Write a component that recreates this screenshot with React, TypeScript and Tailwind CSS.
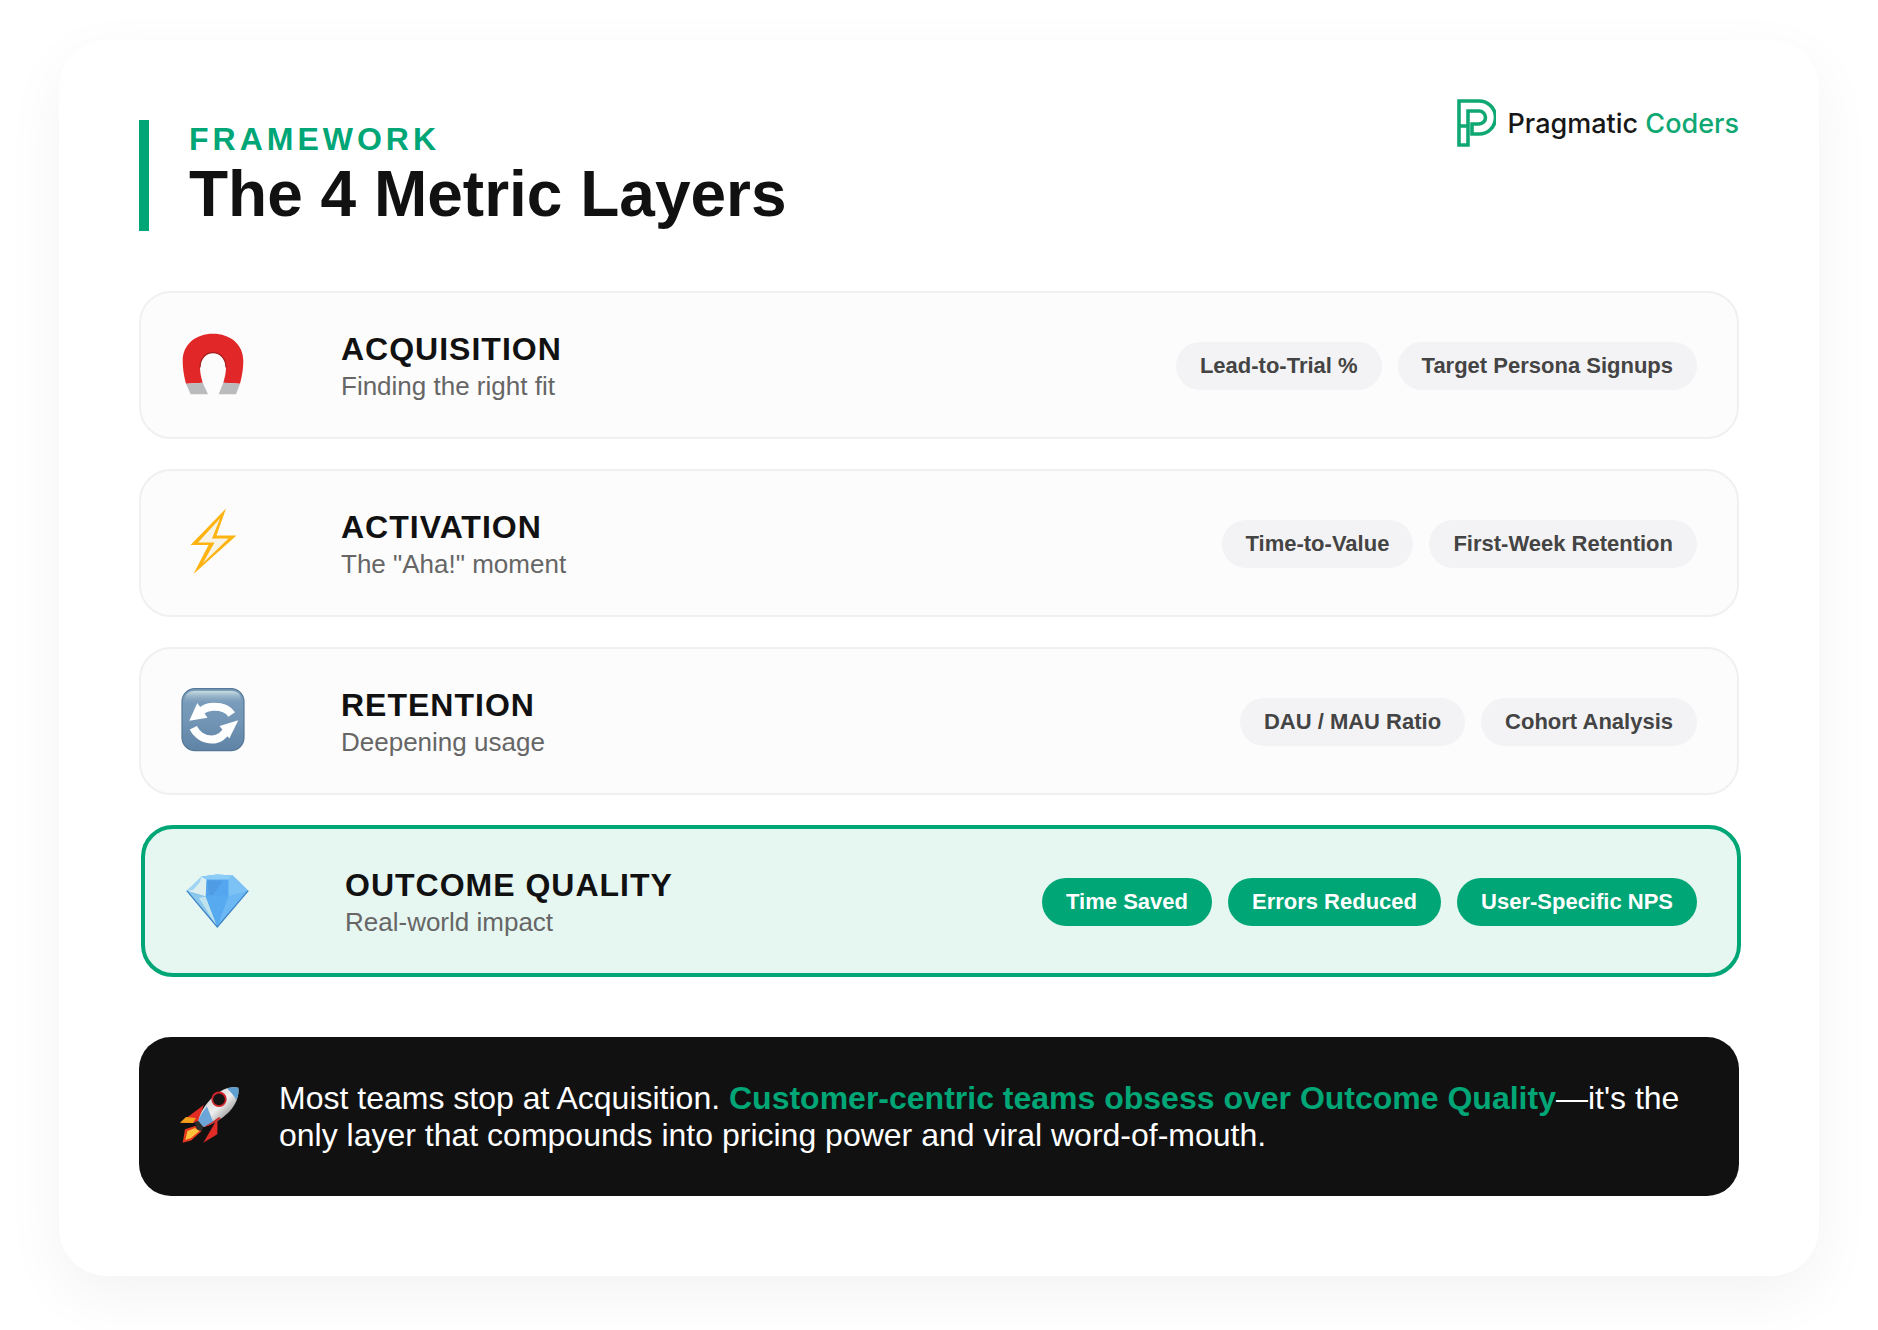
import React from "react";

const Magnet = () => (
  <svg viewBox="0 0 64 64" className="h-[64px] w-[64px] overflow-visible">
    <path d="M5 51.7C2.500 43 1.700 35 1.700 29 1.700 12 15 1.700 32 1.700S62.300 12 62.300 29c0 6-.8 14-3.300 22.700L42.300 50.700C44 45 45 40 45 35.500 45 27 39.500 20.700 32 20.700S19 27 19 35.500c0 4.500 1 9.500 2.700 15.200Z" fill="#e12727" />
    <path d="M19 35.500C19 27 24.500 20.700 32 20.700S45 27 45 35.500" fill="none" stroke="#a51c1c" strokeWidth="1.200" />
    <path d="M5 51.700 21.700 50.700 27 62.300H9.700Z" fill="#b9bbbd" />
    <path d="M42.300 50.700 59 51.700 55 62.300H37.700Z" fill="#b9bbbd" />
  </svg>
);

const Bolt = () => (
  <svg viewBox="0 0 64 64" className="h-[64px] w-[64px] overflow-visible">
    <path d="M45 -1.500 9.500 35H27.500L12.500 64 55.500 25.500H35.500Z" fill="#fdb310" />
    <path d="M39 8.500 17 32.500H33.500L22 53 47.500 28.500H31Z" fill="#f7f3e6" />
  </svg>
);

const Sync = () => (
  <svg viewBox="0 0 64 64" className="h-[64px] w-[64px] overflow-visible">
    <defs>
      <linearGradient id="syncBg" x1="0" y1="0" x2="0" y2="1">
        <stop offset="0" stopColor="#7f9fbd" />
        <stop offset="0.500" stopColor="#7396b6" />
        <stop offset="1" stopColor="#5f83a5" />
      </linearGradient>
      <linearGradient id="syncGloss" x1="0" y1="0" x2="0" y2="1">
        <stop offset="0" stopColor="#c9e0e2" />
        <stop offset="1" stopColor="#7f9fbd" stopOpacity="0" />
      </linearGradient>
    </defs>
    <rect x="1" y="0.600" width="62" height="62" rx="13" fill="url(#syncBg)" stroke="#557896" strokeWidth="1.200" />
    <path d="M4 12C4 6 8 3 14 3H50C56 3 60 6 60 12V16H4Z" fill="url(#syncGloss)" />
    <path d="M50.700 26.500C47 21 40 18.500 32 18.800 27 19 22 21 18.300 25" fill="none" stroke="#fff" strokeWidth="8" />
    <path d="M8.300 32.800 16.300 15 26.500 29.700Z" fill="#fff" />
    <path d="M12.300 39.700C16 47 23 51.500 31 51.500 38 51.500 43.500 47 47.300 40" fill="none" stroke="#fff" strokeWidth="8" />
    <path d="M57.300 32.300 38.500 38 48.300 50.500Z" fill="#fff" />
  </svg>
);

const Gem = () => (
  <svg viewBox="0 0 64 64" className="h-[64px] w-[64px] overflow-visible">
    <path d="M1.700 22.700 16.700 8.400 32 6.600 47.700 7.400 63.300 22.700 32.300 59Z" fill="#58aef0" />
    <path d="M1.700 22.700 16.700 8.400 21.700 11.700 20.700 28.400Z" fill="#dcefee" />
    <path d="M1.700 22.700 16.700 8.400 15 14 8 22Z" fill="#9fd4f4" />
    <path d="M16.700 8.400 32 6.600 47.700 7.400 43.300 11.700H21.700Z" fill="#8ccdf8" />
    <path d="M47.700 7.400 63.300 22.700 43.300 28.400 43.300 11.700Z" fill="#7cc2f5" />
    <path d="M21.700 11.700H43.300V28.400H20.700Z" fill="#54a6ee" />
    <path d="M22 12.500H37V14L28 27H24Z" fill="#4a90d9" opacity="0.500" />
    <path d="M1.700 22.700 20.700 28.400 32.300 59Z" fill="#8cc8ee" />
    <path d="M14 30 20.700 28.400 32.300 59Z" fill="#bfe3ec" />
    <path d="M20.700 28.400H43.300L32.300 59Z" fill="#57aaf0" />
    <path d="M43.300 28.400 63.300 22.700 32.300 59Z" fill="#6cb8f4" />
    <path d="M1.700 22.700 32.300 59 63.300 22.700" fill="none" stroke="#3b83c6" strokeWidth="1.200" />
  </svg>
);

const Rocket = () => (
  <svg viewBox="0 0 64 64" className="h-[64px] w-[64px] overflow-visible">
    <defs>
      <linearGradient id="rocketBody" x1="0.100" y1="0.100" x2="0.900" y2="0.900">
        <stop offset="0" stopColor="#c8c8c8" />
        <stop offset="0.500" stopColor="#eeeeee" />
        <stop offset="1" stopColor="#6a6a6a" />
      </linearGradient>
    </defs>
    <path d="M24.700 20 1 37.700 19 38Z" fill="#e12b25" />
    <path d="M1 37.700 7 32 17 33 14 38Z" fill="#f5a01a" />
    <path d="M36 37.700 24.300 57.700 38.300 49.300 38.500 34Z" fill="#e12b25" />
    <path d="M16 41 6 44.300 3.700 57.700 12 55.500 22.700 46Z" fill="#e8391f" />
    <path d="M16 43 8.500 46 6.300 55 12 53 20.500 46Z" fill="#fdc13c" />
    <path d="M59.300 2.700C52 1 43 3.500 34 12 26 19.500 21 28 19.300 36L24.500 42C32 40 42 35 50 27 57 19.500 60.500 11 59.300 2.700Z" fill="url(#rocketBody)" />
    <path d="M59.300 2.700C56 1.800 52 2 48 3.500 52 7 55 10.500 57.300 15 59.300 11 60 7 59.300 2.700Z" fill="#5d9fd0" />
    <path d="M19.300 36 24.500 42C27.500 41 31 39.700 34.500 37.800L28 21.500C23.500 26.500 20.500 31.500 19.300 36Z" fill="#6ca6d8" />
    <path d="M15.500 37 19.300 36 24.500 42 22.500 46 18 44.500Z" fill="#2a2f2e" />
    <path d="M24.500 42C30 41 36 38 42 33.500L40 32C35 36 30 39 24.500 42Z" fill="#c92a2a" />
    <circle cx="40" cy="14.300" r="6.800" fill="#141414" stroke="#d2232a" strokeWidth="1.800" />
  </svg>
);

const Logo = () => (
  <div className="-mt-[21px] flex items-center gap-[12px]">
    <svg viewBox="0 0 39 48" className="h-[48px] w-[39px]" fill="none">
      <path d="M2 27V2H22A16.500 16.500 0 0 1 22 35H15V25H22A6.500 6.500 0 0 0 22 12H11V46H2V27H11" stroke="#0fa873" strokeWidth="3.600" strokeLinejoin="miter" />
    </svg>
    <div className="font-['Inter',sans-serif] text-[27px] font-medium leading-none text-[#171717]">
      Pragmatic <span className="text-[#0fa873]">Coders</span>
    </div>
  </div>
);

type Row = { title: string; sub: string; pills: string[]; icon: React.ReactNode };

const rows: Row[] = [
  { title: "ACQUISITION", sub: "Finding the right fit", pills: ["Lead-to-Trial %", "Target Persona Signups"], icon: <Magnet /> },
  { title: "ACTIVATION", sub: 'The "Aha!" moment', pills: ["Time-to-Value", "First-Week Retention"], icon: <Bolt /> },
  { title: "RETENTION", sub: "Deepening usage", pills: ["DAU / MAU Ratio", "Cohort Analysis"], icon: <Sync /> },
];

export default function App() {
  return (
    <div className="flex h-[1330px] justify-center overflow-hidden bg-white pt-[40px] font-['Liberation_Sans',Arial,sans-serif]">
      <div className="h-[1236px] w-[1760px] rounded-[48px] bg-white p-[80px] shadow-[0_20px_60px_rgba(0,0,0,0.05)]">
        <div className="flex items-start justify-between">
          <div className="border-l-[10px] border-[#00a676] pb-[1px] pl-[40px]">
            <div className="text-[32px] font-bold leading-[38.400px] tracking-[4px] text-[#00a676]">FRAMEWORK</div>
            <h1 className="text-[64px] font-bold leading-[72px] text-[#111111]">The 4 Metric Layers</h1>
          </div>
          <Logo />
        </div>

        <div className="mt-[60px] flex flex-col gap-[30px]">
          {rows.map((r) => (
            <div key={r.title} className="flex items-center rounded-[32px] border-2 border-[#f0f0f0] bg-[#fcfcfc] px-[40px] py-[33.100px]">
              <div className="mb-[2px] w-[120px] shrink-0">{r.icon}</div>
              <div className="ml-[40px] flex-1 pt-[3px]">
                <div className="text-[32px] font-bold leading-[38.400px] tracking-[1px] text-[#111111]">{r.title}</div>
                <div className="text-[26px] leading-[36.400px] text-[#666666]">{r.sub}</div>
              </div>
              <div className="flex gap-[16px] pt-[1px]">
                {r.pills.map((p) => (
                  <span key={p} className="rounded-full bg-[#f3f3f5] px-[24px] py-[9px] text-[22px] font-bold leading-[30.800px] text-[#444444]">{p}</span>
                ))}
              </div>
            </div>
          ))}
          <div className="-mr-[2px] ml-[2px] flex items-center rounded-[32px] border-4 border-[#00a676] bg-[#e6f6f1] px-[40px] py-[33.100px]">
            <div className="mb-[2px] w-[120px] shrink-0"><Gem /></div>
            <div className="ml-[40px] flex-1 pt-[3px]">
              <div className="text-[32px] font-bold leading-[38.400px] tracking-[1px] text-[#111111]">OUTCOME QUALITY</div>
              <div className="text-[26px] leading-[36.400px] text-[#666666]">Real-world impact</div>
            </div>
            <div className="flex gap-[16px] pt-[1px]">
              {["Time Saved", "Errors Reduced", "User-Specific NPS"].map((p) => (
                <span key={p} className="rounded-full bg-[#00a676] px-[24px] py-[9px] text-[22px] font-bold leading-[30.800px] text-white">{p}</span>
              ))}
            </div>
          </div>
        </div>

        <div className="mt-[60px] flex items-center gap-[40px] rounded-[32px] bg-[#111111] px-[40px] py-[41.200px]">
          <div className="w-[60px] shrink-0"><Rocket /></div>
          <p className="pt-[1px] text-[32px] leading-[37.500px] text-white">
            Most teams stop at Acquisition. <span className="font-bold text-[#00a676]">Customer-centric teams obsess over Outcome Quality</span>—it's the only layer that compounds into pricing power and viral word-of-mouth.
          </p>
        </div>
      </div>
    </div>
  );
}
